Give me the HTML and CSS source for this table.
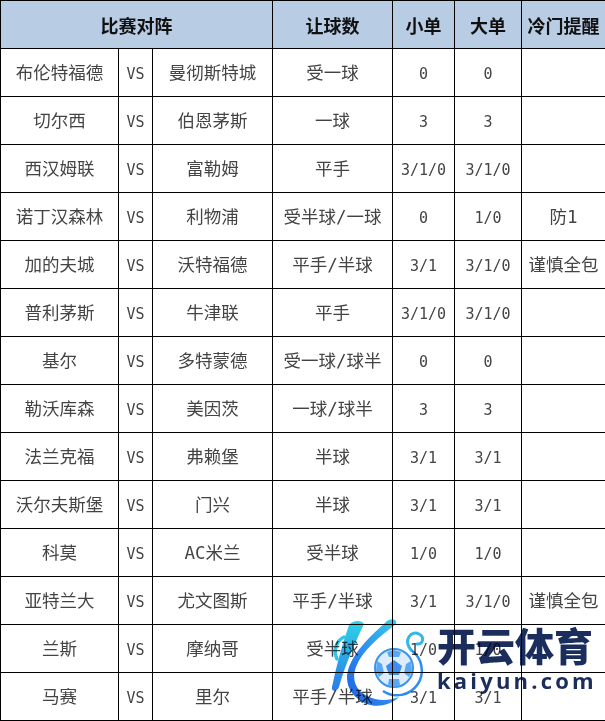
FILE: index.html
```html
<!DOCTYPE html>
<html lang="zh-CN">
<head>
<meta charset="utf-8">
<title>比赛对阵</title>
<link rel="stylesheet" href="styles.css">
</head>
<body>
<div class="page">
<table class="grid">
  <colgroup>
    <col class="c-home"><col class="c-vs"><col class="c-away"><col class="c-hcp"><col class="c-small"><col class="c-big"><col class="c-tip">
  </colgroup>
  <thead>
    <tr><th colspan="3">比赛对阵</th><th>让球数</th><th>小单</th><th>大单</th><th class="tip-h">冷门提醒</th></tr>
  </thead>
  <tbody>
    <tr><td>布伦特福德</td><td class="vs">VS</td><td>曼彻斯特城</td><td>受一球</td><td class="num">0</td><td class="num">0</td><td></td></tr>
    <tr><td>切尔西</td><td class="vs">VS</td><td>伯恩茅斯</td><td>一球</td><td class="num">3</td><td class="num">3</td><td></td></tr>
    <tr><td>西汉姆联</td><td class="vs">VS</td><td>富勒姆</td><td>平手</td><td class="num">3/1/0</td><td class="num">3/1/0</td><td></td></tr>
    <tr><td>诺丁汉森林</td><td class="vs">VS</td><td>利物浦</td><td>受半球/一球</td><td class="num">0</td><td class="num">1/0</td><td>防1</td></tr>
    <tr><td>加的夫城</td><td class="vs">VS</td><td>沃特福德</td><td>平手/半球</td><td class="num">3/1</td><td class="num">3/1/0</td><td>谨慎全包</td></tr>
    <tr><td>普利茅斯</td><td class="vs">VS</td><td>牛津联</td><td>平手</td><td class="num">3/1/0</td><td class="num">3/1/0</td><td></td></tr>
    <tr><td>基尔</td><td class="vs">VS</td><td>多特蒙德</td><td>受一球/球半</td><td class="num">0</td><td class="num">0</td><td></td></tr>
    <tr><td>勒沃库森</td><td class="vs">VS</td><td>美因茨</td><td>一球/球半</td><td class="num">3</td><td class="num">3</td><td></td></tr>
    <tr><td>法兰克福</td><td class="vs">VS</td><td>弗赖堡</td><td>半球</td><td class="num">3/1</td><td class="num">3/1</td><td></td></tr>
    <tr><td>沃尔夫斯堡</td><td class="vs">VS</td><td>门兴</td><td>半球</td><td class="num">3/1</td><td class="num">3/1</td><td></td></tr>
    <tr><td>科莫</td><td class="vs">VS</td><td>AC米兰</td><td>受半球</td><td class="num">1/0</td><td class="num">1/0</td><td></td></tr>
    <tr><td>亚特兰大</td><td class="vs">VS</td><td>尤文图斯</td><td>平手/半球</td><td class="num">3/1</td><td class="num">3/1/0</td><td>谨慎全包</td></tr>
    <tr><td>兰斯</td><td class="vs">VS</td><td>摩纳哥</td><td>受半球</td><td class="num">1/0</td><td class="num">1/0</td><td></td></tr>
    <tr><td>马赛</td><td class="vs">VS</td><td>里尔</td><td>平手/半球</td><td class="num">3/1</td><td class="num">3/1</td><td></td></tr>
  </tbody>
</table>

<div class="watermark">
  <svg class="wm-logo" width="100" height="104" viewBox="0 0 100 104">
    <defs>
      <linearGradient id="gA" x1="0" y1="0" x2="0" y2="1">
        <stop offset="0" stop-color="#2fd3e6"/>
        <stop offset="1" stop-color="#2a7be8"/>
      </linearGradient>
      <linearGradient id="gB" x1="1" y1="0" x2="0" y2="1">
        <stop offset="0" stop-color="#35d0ea"/>
        <stop offset="0.55" stop-color="#2d8cf0"/>
        <stop offset="1" stop-color="#1f5fe0"/>
      </linearGradient>
    </defs>
    <path d="M18 10 C22 5 31 5 33 9 C24 28 14 50 8 72 C6 77 0 77 1 72 C5 52 11 30 18 10 Z" fill="url(#gA)"/>
    <path d="M13 22 C5 26 2 36 6 44" fill="none" stroke="#2fc6e8" stroke-width="3.5" stroke-linecap="round"/>
    <path d="M54 8 C58 3 67 3 65 9 C48 22 31 36 25 52 C19 68 28 80 44 84 C52 86 60 85 68 82 C60 90 46 93 36 89 C20 83 12 68 18 52 C24 36 40 20 54 8 Z" fill="url(#gB)"/>
    <path d="M52 76 A24 24 0 0 0 80 35" fill="none" stroke="#2d8cf0" stroke-width="2.5"/>
    <path d="M80 35 C72 25 80 15 88 19 C94 22 92 30 86 29" fill="none" stroke="#2fb8ea" stroke-width="3" stroke-linecap="round"/>
    <circle cx="63" cy="53" r="19" fill="#dcecfc" stroke="#3b93f0" stroke-width="2"/>
    <polygon points="63,45 71,51 68,60 58,60 55,51" fill="#3a8ff0"/>
    <polygon points="63,35 70,37 68,42 58,42 56,37" fill="#5aa8f2"/>
    <polygon points="75,49 80,46 81,56 78,62 73,58" fill="#5aa8f2"/>
    <polygon points="51,49 46,46 45,56 48,62 53,58" fill="#5aa8f2"/>
    <polygon points="58,64 68,64 69,70 63,72 57,70" fill="#5aa8f2"/>
  </svg>
  <div class="wm-text">
    <div class="wm-cn">开云体育</div>
    <div class="wm-en">kaiyun.com</div>
  </div>
</div>
</div>
</body>
</html>
```
FILE: styles.css
```css
html, body {
  margin: 0;
  padding: 0;
  background: #ffffff;
}

.page {
  position: relative;
  width: 605px;
  height: 721px;
  overflow: hidden;
}

.grid {
  border-collapse: collapse;
  table-layout: fixed;
  width: 605px;
  font-family: "Noto Sans CJK SC", sans-serif;
}

.c-home { width: 118px; }
.c-vs { width: 34px; }
.c-away { width: 120px; }
.c-hcp { width: 120px; }
.c-small { width: 62px; }
.c-big { width: 67px; }
.c-tip { width: 84px; }

.grid th,
.grid td {
  border: 1px solid #000;
  padding: 0;
  text-align: center;
  vertical-align: middle;
  height: 47px;
  line-height: 24px;
  white-space: nowrap;
  overflow: hidden;
}

.grid th {
  background: #b8cce4;
  color: #111;
  font-size: 18px;
  font-weight: 700;
}

.grid td {
  color: #444;
  font-size: 17.5px;
  font-weight: 400;
  font-family: "DejaVu Sans Mono", "Noto Sans CJK SC", monospace;
}

.grid td.vs,
.grid td.num {
  font-family: "DejaVu Sans Mono", monospace;
  font-size: 15px;
  height: 45px;
  padding-top: 2px;
}

.watermark {
  position: absolute;
  left: 331px;
  top: 615px;
  display: flex;
  align-items: flex-start;
  mix-blend-mode: multiply;
}

.wm-logo {
  display: block;
  flex: none;
}

.wm-text {
  display: flex;
  flex-direction: column;
  margin-left: 6px;
  padding-top: 6px;
}

.wm-cn {
  font-family: "Noto Sans CJK SC", sans-serif;
  font-weight: 900;
  font-size: 39px;
  line-height: 46px;
  color: #1b2d5c;
}

.wm-en {
  font-family: "Open Sans", sans-serif;
  font-weight: 700;
  font-size: 22px;
  line-height: 26px;
  color: #1b2d5c;
  letter-spacing: 3.2px;
  margin-top: 0;
}
```
